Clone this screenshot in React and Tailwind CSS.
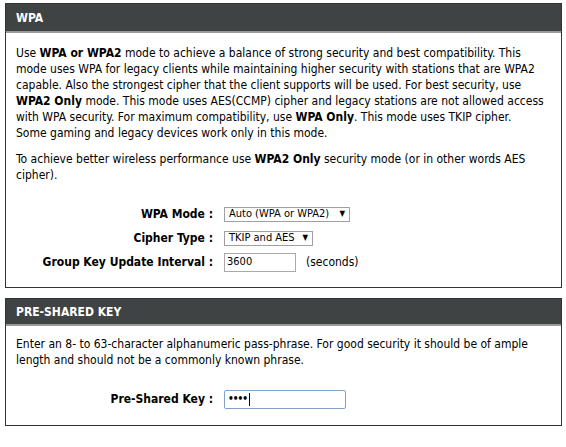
export default function App() {
  const font = { fontFamily: '"DejaVu Sans Condensed", "DejaVu Sans", Tahoma, sans-serif' };
  return (
    <div className="w-[566px] h-[447px] bg-white pt-[3px] pl-[5px] text-[12px] leading-[16px] text-black [font-stretch:condensed]" style={font}>
      <section className="w-[557px] border border-[#333333]">
        <div className="h-[27px] bg-[#404344] px-[10px] flex items-center text-white font-bold">WPA</div>
        <div className="h-[2px] bg-[#9a9a9a]"></div>
        <div className="px-[10px] pt-[12px] pb-[15px]">
          <p>
            Use <b>WPA or WPA2</b> mode to achieve a balance of strong security and best compatibility. This<br />
            mode uses WPA for legacy clients while maintaining higher security with stations that are WPA2<br />
            capable. Also the strongest cipher that the client supports will be used. For best security, use<br />
            <b>WPA2 Only</b> mode. This mode uses AES(CCMP) cipher and legacy stations are not allowed access<br />
            with WPA security. For maximum compatibility, use <b>WPA Only</b>. This mode uses TKIP cipher.<br />
            Some gaming and legacy devices work only in this mode.
          </p>
          <p className="mt-[10px]">
            To achieve better wireless performance use <b>WPA2 Only</b> security mode (or in other words AES<br />
            cipher).
          </p>
          <div className="mt-[21px] flex flex-col gap-[4px]">
            <div className="flex items-center h-[20px]">
              <div className="w-[197px] text-right font-bold">WPA Mode :</div>
              <div className="ml-[11px] w-[126px] h-[15px] border border-[#a0a0a0] flex items-center justify-between px-[4px] text-[11px]">
                <span>Auto (WPA or WPA2)</span>
                <span className="text-[8px]">▼</span>
              </div>
            </div>
            <div className="flex items-center h-[20px]">
              <div className="w-[197px] text-right font-bold">Cipher Type :</div>
              <div className="ml-[11px] w-[89px] h-[15px] border border-[#a0a0a0] flex items-center justify-between px-[4px] text-[11px]">
                <span>TKIP and AES</span>
                <span className="text-[8px]">▼</span>
              </div>
            </div>
            <div className="flex items-center h-[20px]">
              <div className="w-[197px] text-right font-bold">Group Key Update Interval :</div>
              <div className="ml-[11px] w-[72px] h-[19px] border border-[#a9a9a9] flex items-center px-[2px] text-[11px]">3600</div>
              <span className="ml-[10px]">(seconds)</span>
            </div>
          </div>
        </div>
      </section>
      <section className="mt-[10px] w-[557px] border border-[#333333]">
        <div className="h-[25px] bg-[#404344] px-[10px] flex items-center text-white font-bold">PRE-SHARED KEY</div>
        <div className="h-[2px] bg-[#9a9a9a]"></div>
        <div className="px-[10px] pt-[10px] pb-[16px]">
          <p>
            Enter an 8- to 63-character alphanumeric pass-phrase. For good security it should be of ample<br />
            length and should not be a commonly known phrase.
          </p>
          <div className="mt-[21px] flex items-center h-[20px]">
            <div className="w-[197px] text-right font-bold">Pre-Shared Key :</div>
            <div className="ml-[11px] w-[122px] h-[19px] border border-[#7da2ce] rounded-[2px] flex items-center px-[3px] text-[10px] font-bold">
              <span className="tracking-[-1px]">••••</span>
              <span className="ml-[2px] w-px h-[13px] bg-black"></span>
            </div>
          </div>
        </div>
      </section>
    </div>
  );
}
